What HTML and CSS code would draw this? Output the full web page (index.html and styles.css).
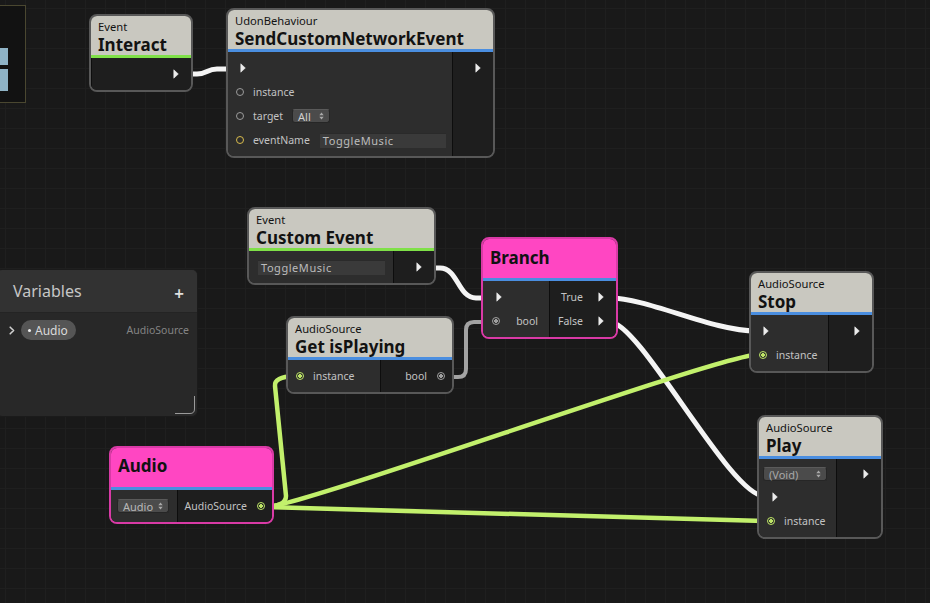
FILE: index.html
```html
<!DOCTYPE html>
<html>
<head>
<meta charset="utf-8">
<link rel="stylesheet" href="styles.css">
</head>
<body>
<div class="canvas">
  <div class="minimap">
    <div class="mm-block mm-a"></div>
    <div class="mm-block mm-b"></div>
  </div>

  <svg class="wires" width="930" height="603" viewBox="0 0 930 603">
    <path class="w-white" d="M185 74 H197 C207 74 207 69 217 69 H235"/>
    <path class="w-white" d="M428 268 H440 C458 268 458 298 476 298 H490"/>
    <path class="w-white" d="M610 298 C648 298 712 331 756 331"/>
    <path class="w-white" d="M610 322 C640 322 730 496 764 496"/>
    <path class="w-gray" d="M446 377 H458 Q466 377 466 369 V330 Q466 322 474 322 H490"/>
    <path class="w-green" d="M266 507 C300 507 720 355 756 355"/>
    <path class="w-green" d="M266 507 C300 507 725 521 764 521"/>
    <path class="w-green" d="M266 507 Q286 506 286 496 L275 386 Q274 377 294 376"/>
  </svg>

  <!-- Interact -->
  <div class="node n-interact">
    <div class="head"><div class="sub">Event</div><div class="title">Interact</div></div>
    <div class="bar bar-green"></div>
    <div class="body">
      <div class="col col-out">
        <div class="row row-right"><svg class="flow" viewBox="0 0 6 10"><path d="M0.8 0.8 L5.3 5 L0.8 9.2 Z"/></svg></div>
      </div>
    </div>
  </div>

  <!-- SendCustomNetworkEvent -->
  <div class="node n-scne">
    <div class="head"><div class="sub">UdonBehaviour</div><div class="title">SendCustomNetworkEvent</div></div>
    <div class="bar bar-blue"></div>
    <div class="body">
      <div class="col col-in w-scne">
        <div class="row row-flow"><svg class="flow" viewBox="0 0 6 10"><path d="M0.8 0.8 L5.3 5 L0.8 9.2 Z"/></svg></div>
        <div class="row row-port"><span class="port"></span><span class="label">instance</span></div>
        <div class="row row-port"><span class="port"></span><span class="label">target</span>
          <span class="drop drop-all">All<svg class="updown" viewBox="0 0 5 8"><path d="M0.3 3.2 L2.5 0.6 L4.7 3.2 Z M0.3 4.8 L2.5 7.4 L4.7 4.8 Z"/></svg></span>
        </div>
        <div class="row row-port"><span class="port port-yellow"></span><span class="label">eventName</span>
          <span class="field field-scne">ToggleMusic</span>
        </div>
      </div>
      <div class="col col-out">
        <div class="row row-right"><svg class="flow" viewBox="0 0 6 10"><path d="M0.8 0.8 L5.3 5 L0.8 9.2 Z"/></svg></div>
      </div>
    </div>
  </div>

  <!-- Custom Event -->
  <div class="node n-custom">
    <div class="head"><div class="sub">Event</div><div class="title">Custom Event</div></div>
    <div class="bar bar-green"></div>
    <div class="body">
      <div class="col col-in w-custom">
        <div class="row row-field"><span class="field field-custom">ToggleMusic</span></div>
      </div>
      <div class="col col-out">
        <div class="row row-right"><svg class="flow" viewBox="0 0 6 10"><path d="M0.8 0.8 L5.3 5 L0.8 9.2 Z"/></svg></div>
      </div>
    </div>
  </div>

  <!-- Branch -->
  <div class="node node-pink n-branch">
    <div class="head head-solo"><div class="title">Branch</div></div>
    <div class="bar bar-blue"></div>
    <div class="body">
      <div class="col col-in w-branch">
        <div class="row row-flow row-flow-b"><svg class="flow" viewBox="0 0 6 10"><path d="M0.8 0.8 L5.3 5 L0.8 9.2 Z"/></svg></div>
        <div class="row row-spread"><span class="port port-gray"></span><span class="label">bool</span></div>
      </div>
      <div class="col col-out">
        <div class="row row-right row-gap"><span class="label">True</span><svg class="flow" viewBox="0 0 6 10"><path d="M0.8 0.8 L5.3 5 L0.8 9.2 Z"/></svg></div>
        <div class="row row-right row-gap"><span class="label">False</span><svg class="flow" viewBox="0 0 6 10"><path d="M0.8 0.8 L5.3 5 L0.8 9.2 Z"/></svg></div>
      </div>
    </div>
  </div>

  <!-- Get isPlaying -->
  <div class="node n-playing">
    <div class="head"><div class="sub">AudioSource</div><div class="title">Get isPlaying</div></div>
    <div class="bar bar-blue"></div>
    <div class="body">
      <div class="col col-in w-playing">
        <div class="row row-port"><span class="port port-green"></span><span class="label">instance</span></div>
      </div>
      <div class="col col-out">
        <div class="row row-right row-portout"><span class="label">bool</span><span class="port port-gray"></span></div>
      </div>
    </div>
  </div>

  <!-- Audio -->
  <div class="node node-pink n-audio">
    <div class="head head-solo head-audio"><div class="title">Audio</div></div>
    <div class="bar bar-blue"></div>
    <div class="body">
      <div class="col col-in w-audio">
        <div class="row row-field"><span class="drop drop-audio">Audio<svg class="updown" viewBox="0 0 5 8"><path d="M0.3 3.2 L2.5 0.6 L4.7 3.2 Z M0.3 4.8 L2.5 7.4 L4.7 4.8 Z"/></svg></span></div>
      </div>
      <div class="col col-out">
        <div class="row row-right row-portout"><span class="label">AudioSource</span><span class="port port-green"></span></div>
      </div>
    </div>
  </div>

  <!-- Stop -->
  <div class="node n-stop">
    <div class="head"><div class="sub">AudioSource</div><div class="title">Stop</div></div>
    <div class="bar bar-blue"></div>
    <div class="body">
      <div class="col col-in w-stop">
        <div class="row row-flow"><svg class="flow" viewBox="0 0 6 10"><path d="M0.8 0.8 L5.3 5 L0.8 9.2 Z"/></svg></div>
        <div class="row row-port"><span class="port port-green"></span><span class="label">instance</span></div>
      </div>
      <div class="col col-out">
        <div class="row row-right"><svg class="flow" viewBox="0 0 6 10"><path d="M0.8 0.8 L5.3 5 L0.8 9.2 Z"/></svg></div>
      </div>
    </div>
  </div>

  <!-- Play -->
  <div class="node n-play">
    <div class="head"><div class="sub">AudioSource</div><div class="title">Play</div></div>
    <div class="bar bar-blue"></div>
    <div class="body">
      <div class="col col-in w-play">
        <div class="row row-field row-short"><span class="drop drop-void">(Void)<svg class="updown" viewBox="0 0 5 8"><path d="M0.3 3.2 L2.5 0.6 L4.7 3.2 Z M0.3 4.8 L2.5 7.4 L4.7 4.8 Z"/></svg></span></div>
        <div class="row row-flow row-flow-b"><svg class="flow" viewBox="0 0 6 10"><path d="M0.8 0.8 L5.3 5 L0.8 9.2 Z"/></svg></div>
        <div class="row row-port"><span class="port port-green"></span><span class="label">instance</span></div>
      </div>
      <div class="col col-out">
        <div class="row row-right row-short"><svg class="flow" viewBox="0 0 6 10"><path d="M0.8 0.8 L5.3 5 L0.8 9.2 Z"/></svg></div>
      </div>
    </div>
  </div>

  <!-- Variables panel -->
  <div class="vars">
    <div class="vars-head">
      <span class="vars-title">Variables</span>
      <span class="vars-plus">+</span>
    </div>
    <div class="vars-row">
      <svg class="chev" viewBox="0 0 6 9"><path d="M1.2 1.2 L4.6 4.5 L1.2 7.8"/></svg>
      <span class="pill"><span class="pill-dot"></span>Audio</span>
      <span class="vars-type">AudioSource</span>
    </div>
    <svg class="resize" viewBox="0 0 22 20"><path d="M1 18.5 H16 Q20.5 18.5 20.5 14 V1"/></svg>
  </div>
</div>
</body>
</html>
```

FILE: styles.css
```css
* { box-sizing: border-box; }
html, body { margin: 0; padding: 0; }
body {
  background: #191919;
  font-family: "Noto Sans", "Open Sans", "DejaVu Sans", sans-serif;
}

.canvas {
  position: relative;
  width: 930px;
  height: 603px;
  overflow: hidden;
  background-color: #191919;
  background-image:
    linear-gradient(#1f1f1f 1px, transparent 1px),
    linear-gradient(90deg, #1f1f1f 1px, transparent 1px);
  background-size: 20px 20px;
  background-position: 5px 8px;
}

/* minimap */
.minimap {
  position: absolute;
  left: -2px;
  top: 5px;
  width: 28px;
  height: 98px;
  border: 1px solid #4a4730;
  background: #121212;
}
.mm-block {
  position: absolute;
  left: 0;
  width: 9px;
  background: #8fb3c6;
}
.mm-a { top: 42px; height: 17px; }
.mm-b { top: 63px; height: 22px; }

/* wires */
.wires { position: absolute; left: 0; top: 0; }
.wires path { fill: none; stroke-linecap: round; stroke-linejoin: round; }
.w-white { stroke: #f4f4f4; stroke-width: 5; }
.w-green { stroke: #c2f06c; stroke-width: 4.5; }
.w-gray { stroke: #a3a3a3; stroke-width: 4; }

/* nodes */
.node {
  position: absolute;
  border: 2px solid #585858;
  border-radius: 8px;
  overflow: hidden;
  background: #1e1e1e;
}
.node-pink { border-color: #d93aa6; }
.head {
  height: 39px;
  overflow: hidden;
  background: #c9c8c0;
  padding: 3px 7px 0;
  color: #121212;
  white-space: nowrap;
}
.node-pink .head { background: #ff46c2; }
.head-solo { padding-top: 9px; }
.head-audio { padding-top: 8px; }
.sub { font-size: 11.2px; line-height: 16px; }
.title { font-size: 17px; line-height: 20px; font-weight: 700; }
.bar { height: 3px; }
.bar-green { background: #7fe048; }
.bar-blue { background: #4a8ee0; }

.body { display: flex; }
.col { padding: 4px 0; }
.col-in { background: #2d2d2d; flex: none; }
.col-out { flex: 1; background: #1e1e1e; border-left: 1px solid #0d0d0d; }

.row {
  height: 24px;
  display: flex;
  align-items: center;
  font-size: 10.5px;
  color: #c3c3c3;
  white-space: nowrap;
}
.row-short { height: 22px; }
.row-flow { padding-left: 12px; }
.row-flow-b { padding-left: 13px; }
.row-port { padding-left: 8px; }
.row-port .label { margin-left: 9px; }
.row-spread { padding: 0 11px 0 9px; justify-content: space-between; }
.row-field { padding-left: 6px; }
.row-right { justify-content: flex-end; padding-right: 12px; }
.row-gap .label { margin-right: 15px; }
.row-portout { padding-right: 7px; }
.row-portout .label { margin-right: 10px; }

.flow { width: 6px; height: 10px; flex: none; }
.flow path { fill: #ececec; stroke: #ececec; stroke-width: 0.6; stroke-linejoin: round; }

.port {
  width: 8px;
  height: 8px;
  border-radius: 50%;
  border: 1.5px solid #9b9b9b;
  flex: none;
}
.port-yellow { border-color: #d8bb4c; }
.port-green {
  border-color: #bde466;
  background: radial-gradient(circle, #bde466 0 1.6px, transparent 2.1px);
}
.port-gray {
  border-color: #a0a0a0;
  background: radial-gradient(circle, #a0a0a0 0 1.6px, transparent 2.1px);
}

.drop {
  display: inline-flex;
  align-items: center;
  justify-content: space-between;
  height: 14px;
  padding: 0 5px 0 5px;
  background: #4b4b4b;
  border: 1px solid #262626;
  border-top-color: #5a5a5a;
  border-radius: 3px;
  color: #d0d0d0;
  font-size: 11px;
}
.drop-all { margin-left: 9px; width: 38px; }
.drop-audio { width: 52px; color: #b8b8b8; }
.drop-void { width: 64px; margin-left: -2px; color: #a8a8a8; }
.updown { width: 5px; height: 8px; flex: none; }
.updown path { fill: #a9a9a9; }

.field {
  display: inline-block;
  height: 15px;
  line-height: 14px;
  background: #3a3a3a;
  border-top: 1px solid #2a2a2a;
  color: #bcbcbc;
  font-size: 11px;
  letter-spacing: 0.55px;
  padding-left: 3px;
}
.field-scne { width: 126px; margin-left: 10px; }
.field-custom { width: 127px; margin-left: 3px; }

/* node placements on the graph canvas */
.n-interact { left: 89px; top: 14px; width: 104px; }
.n-scne { left: 226px; top: 8px; width: 269px; }
.w-scne { width: 224px; }
.n-custom { left: 247px; top: 207px; width: 189px; }
.w-custom { width: 144px; }
.n-branch { left: 481px; top: 237px; width: 137px; }
.w-branch { width: 66px; }
.n-playing { left: 286px; top: 316px; width: 168px; }
.w-playing { width: 92px; }
.n-audio { left: 109px; top: 446px; width: 165px; }
.w-audio { width: 66px; }
.n-stop { left: 749px; top: 271px; width: 125px; }
.w-stop { width: 77px; }
.n-play { left: 757px; top: 415px; width: 126px; }
.w-play { width: 77px; }

/* variables panel */
.vars {
  position: absolute;
  left: -4px;
  top: 269px;
  width: 202px;
  height: 148px;
  background: #282828;
  border: 1px solid #1b1b1b;
  border-radius: 6px;
  overflow: hidden;
}
.vars-head {
  height: 43px;
  background: #323232;
  border-bottom: 1px solid #242424;
  display: flex;
  align-items: center;
  justify-content: space-between;
  padding: 0 13px 0 16px;
}
.vars-title { font-size: 16px; color: #c6c6c6; }
.vars-plus { font-size: 17px; color: #e0e0e0; margin-top: 5px; font-weight: 600; }
.vars-row {
  display: flex;
  align-items: center;
  height: 24px;
  margin-top: 5px;
  padding: 0 8px 0 12px;
}
.chev { width: 6px; height: 9px; flex: none; }
.chev path { fill: none; stroke: #d0d0d0; stroke-width: 1.6; stroke-linecap: round; stroke-linejoin: round; }
.pill {
  display: inline-flex;
  align-items: center;
  height: 20px;
  margin-left: 6px;
  padding: 0 8px 0 7px;
  background: #555555;
  border-radius: 10px;
  font-size: 12px;
  color: #dadada;
}
.pill-dot { width: 3px; height: 3px; border-radius: 50%; background: #f0f0f0; margin-right: 4px; }
.vars-type { margin-left: auto; font-size: 10.5px; color: #848484; }
.resize {
  position: absolute;
  right: 1px;
  bottom: 1px;
  width: 22px;
  height: 20px;
}
.resize path { fill: none; stroke: #9a9a9a; stroke-width: 1; }
```
